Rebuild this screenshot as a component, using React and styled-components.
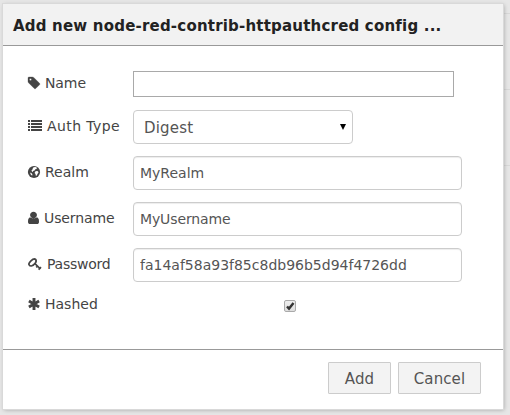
import React from "react";
import styled, { createGlobalStyle } from "styled-components";

const GlobalStyle = createGlobalStyle`
  * { box-sizing: border-box; }
  body { margin: 0; background: #e6e6e6; overflow: hidden; }
  input, select, button { font-family: inherit; margin: 0; }
`;

const Page = styled.div`
  width: 510px;
  height: 415px;
  padding: 4px 7px 6px 3px;
  font-family: "DejaVu Sans", Verdana, sans-serif;
  background:
    linear-gradient(#d8d8d8, #d8d8d8) 503px 13px / 7px 1px no-repeat,
    linear-gradient(#d8d8d8, #d8d8d8) 503px 89px / 7px 1px no-repeat,
    linear-gradient(#d8d8d8, #d8d8d8) 503px 165px / 7px 1px no-repeat,
    #e6e6e6;
`;

const Dialog = styled.section`
  display: flex;
  flex-direction: column;
  width: 500px;
  height: 405px;
  background: #fff;
  box-shadow: 0 0 0 1px #d9d9d9, 1px 1px 4px rgba(0, 0, 0, 0.28);
`;

const TitleBar = styled.header`
  height: 42px;
  padding-left: 10px;
  background: #f2f2f2;
  border-bottom: 1px solid #999;
  color: #222;
  font-size: 15px;
  font-weight: bold;
  line-height: 44px;
  letter-spacing: 0.2px;
  white-space: nowrap;
`;

const Form = styled.form`
  flex: 1;
  display: flex;
  flex-direction: column;
  gap: 12px;
  padding: 25px 0 0 25px;
`;

const Row = styled.div`
  display: flex;
  height: ${(p) => p.$height || 34}px;
`;

const Label = styled.label`
  display: flex;
  align-items: center;
  width: 105px;
  height: ${(p) => p.$height || 32}px;
  color: #444;
  font-size: 14px;
  line-height: 20px;
  white-space: nowrap;
  letter-spacing: ${(p) => p.$spacing || 0}px;
`;

const Icon = styled.svg`
  flex: none;
  width: ${(p) => p.$width || 14}px;
  height: 14px;
  margin-right: 5px;
  overflow: visible;
  fill: #444;
`;

const PlainInput = styled.input`
  width: 321px;
  height: 26px;
  border: 1px solid #a9a9a9;
  border-radius: 0;
  outline: none;
`;

const TextInput = styled.input`
  width: 329px;
  height: 34px;
  padding: 0 6px;
  border: 1px solid #ccc;
  border-radius: 4px;
  box-shadow: inset 0 1px 1px rgba(0, 0, 0, 0.075);
  color: #555;
  font-size: 14px;
  letter-spacing: ${(p) => p.$spacing || 0}px;
  outline: none;
`;

const Select = styled.div`
  display: flex;
  align-items: center;
  justify-content: space-between;
  width: 220px;
  height: 34px;
  padding: 1px 6px 0 10px;
  border: 1px solid #ccc;
  border-radius: 4px;
  color: #555;
  font-size: 15px;
  letter-spacing: 0.2px;
`;

const Arrow = styled.svg`
  width: 6px;
  height: 6px;
  margin-top: -2px;
`;

const CheckBox = styled.span`
  display: block;
  width: 12px;
  height: 12px;
  margin: 6px 0 0 151px;
  border: 1px solid #aaa;
  border-radius: 2px;
  background: linear-gradient(#eee, #dedede);
`;

const CheckMark = styled.svg`
  display: block;
  width: 10px;
  height: 10px;
`;

const Footer = styled.footer`
  display: flex;
  justify-content: flex-end;
  gap: 7px;
  height: 60px;
  padding: 12px 22px 0 0;
  border-top: 1px solid #999;
`;

const Button = styled.button`
  width: ${(p) => p.$width}px;
  height: 32px;
  padding: 2px 0 0;
  border: 1px solid #ccc;
  border-radius: 1px;
  background: #f3f3f3;
  color: #555;
  font-size: 15px;
  letter-spacing: 0.1px;
`;

const TagIcon = () => (
  <Icon viewBox="0 0 1792 1792" $width={12} preserveAspectRatio="xMinYMid slice">
    <path stroke="#444" strokeWidth="40" d="M448 448q0-53-37.5-90.5t-90.5-37.5-90.5 37.5-37.5 90.5 37.5 90.5 90.5 37.5 90.5-37.5 37.5-90.5zm1067 576q0 53-37 90l-491 492q-39 37-91 37-53 0-90-37l-715-716q-38-37-64.5-101t-26.5-117v-416q0-52 38-90t90-38h416q53 0 117 26.5t102 64.5l715 714q37 39 37 91z" />
  </Icon>
);

const ListIcon = () => (
  <Icon viewBox="0 0 14 14" shapeRendering="crispEdges">
    <path d="M0 1h2v2H0zM3 1h11v2H3zM0 4h2v2H0zM3 4h11v2H3zM0 7h2v2H0zM3 7h11v2H3zM0 10h2v2H0zM3 10h11v2H3z" />
  </Icon>
);

const GlobeIcon = () => (
  <Icon viewBox="0 0 12 14" $width={12}>
    <circle cx="6" cy="7" r="6.1" />
    <path
      fill="#fff"
      d="M5.6 2.3 7.5 2l1.500.7-.5 1.200-1.200.3-.7 1.300-1.500.4-.2 1-1-.3-.4-1.300 1-.8.3-1.200zM7.200 6.600l1.500-.7 1.300.4.5 1.200-.9 1.300-.8 1.700-1 .3-.3-1.700-.9-1zM2 7.600l1.600.6.8 1.100-.2 1.500-1.300-1z"
    />
  </Icon>
);

const UserIcon = () => (
  <Icon viewBox="256 0 1280 1792" $width={11} preserveAspectRatio="none">
    <path d="M1536 1399q0 109-62.500 187t-150.500 78h-854q-88 0-150.500-78t-62.500-187q0-100 8.500-190t31.500-170 58.500-120 94-75 134.500-25q131 110 313 110t313-110q76 0 134.500 25t94 75 58.500 120 31.500 170 8.500 190zm-240-887q0 166-120 284t-280 118-280-118-120-284 120-284 280-118 280 118 120 284z" />
  </Icon>
);

const KeyIcon = () => (
  <Icon viewBox="0 0 14 14" $width={14}>
    <g fill="none" stroke="#444" strokeWidth="1.7">
      <path d="M1.1 7.9Q.2 6.500 2.700 4.100T7 2Q8.900 3.100 7.700 5.500 5.600 8.600 3.300 9 1.800 9.100 1.100 7.900z" />
      <path d="M6.700 6.400 12.500 12M8.200 10.400 10 8.600M10.600 12.600 13 10.200" />
    </g>
  </Icon>
);

const AsteriskIcon = () => (
  <Icon viewBox="0 0 12 14" $width={12}>
    <path
      fill="none"
      stroke="#444"
      strokeWidth="2.9"
      d="M6 1.100v11.800M.9 4.100l10.200 5.800M11.100 4.100.9 9.900"
    />
  </Icon>
);

export default function App() {
  return (
    <>
      <GlobalStyle />
      <Page>
        <Dialog>
          <TitleBar>Add new node-red-contrib-httpauthcred config ...</TitleBar>
          <Form>
            <Row $height={27}>
              <Label $height={24} $spacing={-0.1}><TagIcon />Name</Label>
              <PlainInput />
            </Row>
            <Row>
              <Label $spacing={0.4}><ListIcon />Auth Type</Label>
              <Select>
                Digest
                <Arrow viewBox="0 0 6 6"><path d="M0 0h6L3 6z" /></Arrow>
              </Select>
            </Row>
            <Row>
              <Label><GlobeIcon />Realm</Label>
              <TextInput defaultValue="MyRealm" />
            </Row>
            <Row>
              <Label $spacing={-0.12}><UserIcon />Username</Label>
              <TextInput defaultValue="MyUsername" $spacing={-0.12} />
            </Row>
            <Row>
              <Label $spacing={-0.25}><KeyIcon />Password</Label>
              <TextInput defaultValue="fa14af58a93f85c8db96b5d94f4726dd" />
            </Row>
            <Row $height={20}>
              <Label $height={20}><AsteriskIcon />Hashed</Label>
              <CheckBox>
                <CheckMark viewBox="0 0 10 10">
                  <path d="M2 5.500 4 7.600 8.500 2" fill="none" stroke="#333" strokeWidth="2.400" />
                </CheckMark>
              </CheckBox>
            </Row>
          </Form>
          <Footer>
            <Button type="button" $width={63}>Add</Button>
            <Button type="button" $width={83}>Cancel</Button>
          </Footer>
        </Dialog>
      </Page>
    </>
  );
}
